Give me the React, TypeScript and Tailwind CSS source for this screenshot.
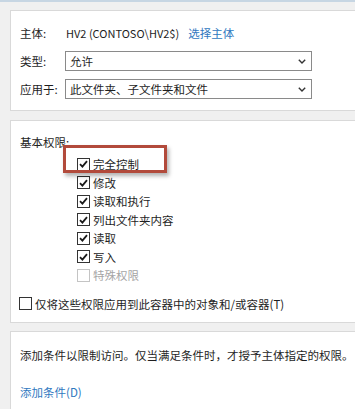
import React from 'react';

const perms = [
  { label: '完全控制', checked: true },
  { label: '修改', checked: true },
  { label: '读取和执行', checked: true },
  { label: '列出文件夹内容', checked: true },
  { label: '读取', checked: true },
  { label: '写入', checked: true },
  { label: '特殊权限', checked: false, disabled: true },
];

const CheckBox: React.FC<{ checked?: boolean; disabled?: boolean }> = ({ checked, disabled }) => (
  <span
    className={`w-[13px] h-[13px] shrink-0 border bg-white flex items-center justify-center ${
      disabled ? 'border-[#c4c4c4]' : 'border-[#333]'
    }`}
  >
    {checked && (
      <svg width="9" height="8" viewBox="0 0 9 8">
        <path d="M1 4.2 L3.4 6.6 L8 1.2" fill="none" stroke="#1a1a1a" strokeWidth="1.8" />
      </svg>
    )}
  </span>
);

const Select: React.FC<{ value: string }> = ({ value }) => (
  <div className="w-[247px] h-[20px] border border-[#8a8a8a] bg-white flex items-center justify-between pl-[4px] pr-[5px]">
    <span>{value}</span>
    <svg width="8" height="5" viewBox="0 0 8 5">
      <path d="M0.8 0.8 L4 4 L7.2 0.8" fill="none" stroke="#333" strokeWidth="1.4" />
    </svg>
  </div>
);

export default function App() {
  return (
    <div
      className="w-[355px] h-[409px] bg-[#f0f0f0] overflow-hidden relative text-[11.5px] leading-[16px] text-[#1e1e1e]"
      style={{ fontFamily: '"Noto Sans CJK SC", "Noto Sans", sans-serif' }}
    >
      <div className="h-[2px] bg-[#c7d6e3]" />

      {/* principal / type / applies to */}
      <div className="ml-[10px] mt-[8px] h-[101px] bg-white border border-r-0 border-[#d9d9d9] pl-[9px] pt-[12px] flex flex-col gap-[8px]">
        <div className="h-[20px] flex items-center">
          <span className="w-[45px]">主体:</span>
          <span className="ml-[1px] text-[11px]">HV2 (CONTOSO\HV2$)</span>
          <span className="ml-[9px] text-[#2f78c0]">选择主体</span>
        </div>
        <div className="h-[20px] flex items-center">
          <span className="w-[45px]">类型:</span>
          <Select value="允许" />
        </div>
        <div className="h-[20px] flex items-center">
          <span className="w-[45px]">应用于:</span>
          <Select value="此文件夹、子文件夹和文件" />
        </div>
      </div>

      {/* basic permissions */}
      <div className="ml-[10px] mt-[9px] h-[203px] bg-white border border-r-0 border-[#d9d9d9] pl-[9px] pt-[13px] relative">
        <div className="h-[16px] leading-[16px]">基本权限:</div>
        <div className="ml-[57px] mt-[5px] flex flex-col">
          {perms.map((p) => (
            <div key={p.label} className="h-[18.5px] flex items-center gap-[3px]">
              <CheckBox checked={p.checked} disabled={p.disabled} />
              <span className={p.disabled ? 'text-[#a5a5a5]' : ''}>{p.label}</span>
            </div>
          ))}
        </div>
        <div className="mt-[10px] h-[18px] flex items-center gap-[3px] -ml-[1px]">
          <CheckBox />
          <span>仅将这些权限应用到此容器中的对象和/或容器(T)</span>
        </div>

        {/* highlight annotation */}
        <div className="absolute left-[52px] top-[24px] w-[104px] h-[28px] border-[3px] border-[#b24a3b] shadow-[2px_3px_4px_rgba(0,0,0,0.3)] pointer-events-none" />
      </div>

      {/* conditions */}
      <div className="ml-[10px] mt-[8px] h-[100px] bg-white border border-r-0 border-[#d9d9d9] pl-[9px] pt-[15px]">
        <div>添加条件以限制访问。仅当满足条件时，才授予主体指定的权限。</div>
        <div className="mt-[21px] text-[#2f78c0]">添加条件(D)</div>
      </div>
    </div>
  );
}
